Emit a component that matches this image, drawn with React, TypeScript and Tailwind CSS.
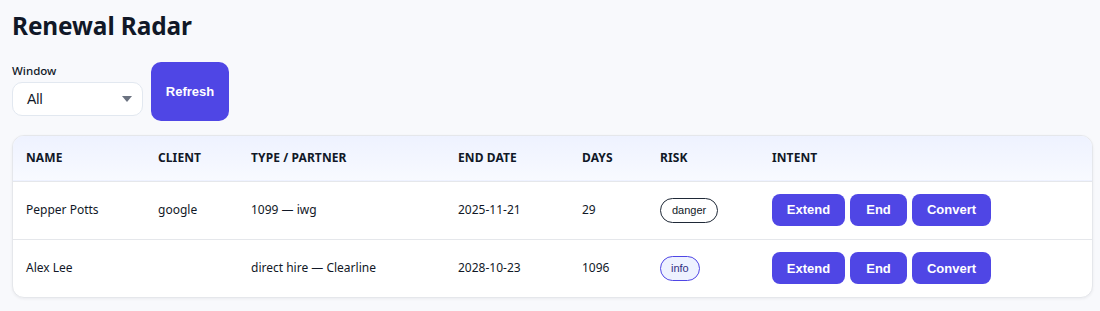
import React from "react";

const rows = [
  { name: "Pepper Potts", client: "google", type: "1099 — iwg", end: "2025-11-21", days: "29", risk: "danger" },
  { name: "Alex Lee", client: "", type: "direct hire — Clearline", end: "2028-10-23", days: "1096", risk: "info" },
];

export default function App() {
  return (
    <div className="min-h-[311px] bg-[#f8f9fc] px-3 pt-[11px] text-[#111827]" style={{ fontFamily: '"Noto Sans", sans-serif' }}>
      <h1 className="text-[24.4px] font-bold leading-[30px] tracking-[-0.1px]">Renewal Radar</h1>
      <div className="mt-[21px] flex items-start gap-2">
        <div className="flex flex-col pt-[1px]">
          <label className="text-[11.5px] leading-[16px] font-medium">Window</label>
          <div className="relative mt-[3px] h-[34px] w-[131px] rounded-[10px] border border-[#e2e8f0] bg-white">
            <span className="absolute left-[14px] top-[8px] text-[14px] leading-[16px]" style={{ fontFamily: '"Liberation Sans", Arial, sans-serif' }}>All</span>
            <svg className="absolute right-[10px] top-[13px]" width="10" height="6" viewBox="0 0 10 6"><path d="M0 0h10L5 6z" fill="#6b7280" /></svg>
          </div>
        </div>
        <button className="h-[59px] w-[78px] rounded-[10px] bg-[#4f46e5] text-[13px] font-bold text-white" style={{ fontFamily: '"Liberation Sans", Arial, sans-serif' }}>Refresh</button>
      </div>
      <div className="mt-[14px] w-[1081px] overflow-hidden rounded-[12px] border border-[#e5e7eb] bg-white shadow-[0_1px_3px_rgba(15,23,42,0.06)]">
        <table className="w-full border-collapse text-left">
          <thead>
            <tr className="h-[45px] bg-gradient-to-b from-[#eef2ff] to-[#f8faff] border-b border-[#e5e7eb]">
              {["Name", "Client", "Type / Partner", "End Date", "Days", "Risk", "Intent"].map((h, i) => (
                <th key={h} className={"px-[13px] text-[12px] font-bold uppercase tracking-[0.1px] text-[#111827] " + ["w-[132px]", "w-[93px]", "w-[207px]", "w-[124px]", "w-[78px]", "w-[112px]", ""][i]}>{h}</th>
              ))}
            </tr>
          </thead>
          <tbody>
            {rows.map((r, idx) => (
              <tr key={r.name} className={"h-[58px] text-[12px] " + (idx === 0 ? "border-b border-[#e5e7eb]" : "")}>
                <td className="px-[13px]">{r.name}</td>
                <td className="px-[13px]">{r.client}</td>
                <td className="px-[13px]">{r.type}</td>
                <td className="px-[13px]">{r.end}</td>
                <td className="px-[13px]">{r.days}</td>
                <td className="px-[13px]">
                  {r.risk === "danger" ? (
                    <span className="inline-flex h-[25px] items-center rounded-full border border-[#1f2937] bg-white px-[11px] text-[11px] text-[#111827]" style={{ fontFamily: '"Liberation Sans", Arial, sans-serif' }}>danger</span>
                  ) : (
                    <span className="inline-flex h-[25px] items-center rounded-full border border-[#4f46e5] bg-[#eef2ff] px-[10px] text-[11px] text-[#312e81]" style={{ fontFamily: '"Liberation Sans", Arial, sans-serif' }}>info</span>
                  )}
                </td>
                <td className="px-[13px]">
                  <div className="flex gap-[5px]" style={{ fontFamily: '"Liberation Sans", Arial, sans-serif' }}>
                    <button className="h-[32px] w-[73px] rounded-[8px] bg-[#4f46e5] text-[13px] font-bold text-white">Extend</button>
                    <button className="h-[32px] w-[57px] rounded-[8px] bg-[#4f46e5] text-[13px] font-bold text-white">End</button>
                    <button className="h-[32px] w-[79px] rounded-[8px] bg-[#4f46e5] text-[13px] font-bold text-white">Convert</button>
                  </div>
                </td>
              </tr>
            ))}
          </tbody>
        </table>
      </div>
    </div>
  );
}
